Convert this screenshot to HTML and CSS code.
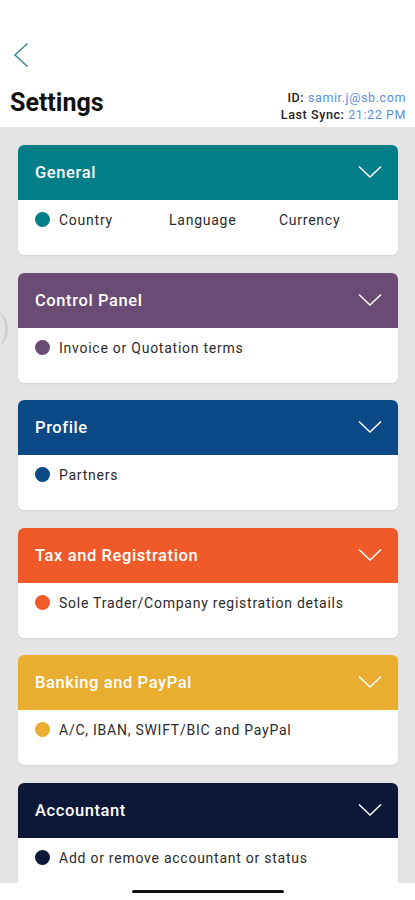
FILE: index.html
```html
<!doctype html>
<html lang="en">
<head>
    <meta charset="UTF-8">
    <meta name="viewport" content="width=device-width, initial-scale=1.0">
    <title>Settings</title>
    <link rel="stylesheet" href="styles.css">
</head>
<body>
    <div id="app">
        <div class="top">
            <div class="back">
                <svg width="16" height="26" viewBox="0 0 16 26"><path d="M14.5 1.5 L2 13 L14.5 24.5" fill="none" stroke="#3b8996" stroke-width="1.6"/></svg>
            </div>
            <div class="title-row">
                <h1>Settings</h1>
                <div class="sync">
                    <p><b>ID:</b> <span>samir.j@sb.com</span></p>
                    <p><b>Last Sync:</b> <span>21:22 PM</span></p>
                </div>
            </div>
        </div>

        <div class="list">
            <span class="pull"></span>

            <div class="card teal">
                <div class="card-head">
                    <span>General</span>
                    <svg class="arrow" width="24" height="14" viewBox="0 0 24 14"><path d="M1 1.5 L12 12 L23 1.5" fill="none" stroke="#fff" stroke-width="1.5"/></svg>
                </div>
                <div class="card-body">
                    <i class="dot"></i>
                    <span class="cell">Country</span>
                    <span class="cell">Language</span>
                    <span>Currency</span>
                </div>
            </div>

            <div class="card purple">
                <div class="card-head">
                    <span>Control Panel</span>
                    <svg class="arrow" width="24" height="14" viewBox="0 0 24 14"><path d="M1 1.5 L12 12 L23 1.5" fill="none" stroke="#fff" stroke-width="1.5"/></svg>
                </div>
                <div class="card-body">
                    <i class="dot"></i>
                    <span>Invoice or Quotation terms</span>
                </div>
            </div>

            <div class="card blue">
                <div class="card-head">
                    <span>Profile</span>
                    <svg class="arrow" width="24" height="14" viewBox="0 0 24 14"><path d="M1 1.5 L12 12 L23 1.5" fill="none" stroke="#fff" stroke-width="1.5"/></svg>
                </div>
                <div class="card-body">
                    <i class="dot"></i>
                    <span>Partners</span>
                </div>
            </div>

            <div class="card orange">
                <div class="card-head">
                    <span>Tax and Registration</span>
                    <svg class="arrow" width="24" height="14" viewBox="0 0 24 14"><path d="M1 1.5 L12 12 L23 1.5" fill="none" stroke="#fff" stroke-width="1.5"/></svg>
                </div>
                <div class="card-body">
                    <i class="dot"></i>
                    <span>Sole Trader/Company registration details</span>
                </div>
            </div>

            <div class="card yellow">
                <div class="card-head">
                    <span>Banking and PayPal</span>
                    <svg class="arrow" width="24" height="14" viewBox="0 0 24 14"><path d="M1 1.5 L12 12 L23 1.5" fill="none" stroke="#fff" stroke-width="1.5"/></svg>
                </div>
                <div class="card-body">
                    <i class="dot"></i>
                    <span>A/C, IBAN, SWIFT/BIC and PayPal</span>
                </div>
            </div>

            <div class="card navy">
                <div class="card-head">
                    <span>Accountant</span>
                    <svg class="arrow" width="24" height="14" viewBox="0 0 24 14"><path d="M1 1.5 L12 12 L23 1.5" fill="none" stroke="#fff" stroke-width="1.5"/></svg>
                </div>
                <div class="card-body">
                    <i class="dot"></i>
                    <span>Add or remove accountant or status</span>
                </div>
            </div>
        </div>

        <div class="home-bar"><span></span></div>
    </div>
</body>
</html>
```

FILE: styles.css
```css
*{
    margin: 0;
    padding: 0;
    box-sizing: border-box;
}
body{
    font-family: Roboto, "Liberation Sans", sans-serif;
    background: #fff;
}
#app{
    width: 415px;
    height: 900px;
    display: flex;
    flex-direction: column;
    overflow: hidden;
}
.top{
    height: 127px;
    background: #fff;
    flex-shrink: 0;
}
.back{
    padding: 42px 0 0 13px;
    height: 84px;
}
.title-row{
    display: flex;
    justify-content: space-between;
    align-items: flex-start;
    padding: 0 9px 0 10px;
}
h1{
    font-size: 25px;
    font-weight: bold;
    color: #111;
    line-height: 38px;
}
.sync{
    text-align: right;
    font-size: 12.5px;
    line-height: 17px;
    letter-spacing: 0.6px;
    color: #222;
    padding-top: 5px;
}
.sync b{
    font-weight: 500;
}
.sync span{
    color: #5b8de6;
}

.list{
    flex: 1;
    background: #e4e4e4;
    padding: 18px 17px 0 18px;
    position: relative;
    overflow: hidden;
}
/* faint pull tab on the left edge */
.pull{
    position: absolute;
    left: -14px;
    top: 185px;
    width: 22px;
    height: 34px;
    border-right: 3px solid #cfcfcf;
    border-radius: 50%;
}
.card{
    background: #fff;
    border-radius: 6px;
    overflow: hidden;
    margin-bottom: 17.5px;
    box-shadow: 0 1px 2px rgba(0,0,0,0.08);
}
.card-head{
    height: 55px;
    display: flex;
    align-items: center;
    justify-content: space-between;
    padding: 0 16px 0 17px;
    color: #fff;
    font-size: 16.5px;
    font-weight: 500;
    letter-spacing: 0.6px;
}
.card-head .arrow{
    margin-top: -1px;
}
.card-body{
    height: 55px;
    display: flex;
    align-items: flex-start;
    padding: 12px 17px 0 17px;
    font-size: 14px;
    line-height: 16px;
    color: #2b2b2b;
    letter-spacing: 0.75px;
}
.dot{
    width: 15px;
    height: 15px;
    border-radius: 50%;
    margin-right: 9px;
    flex-shrink: 0;
}
.cell{
    width: 110px;
}
.teal .card-head, .teal .dot{ background: #027e88; }
.purple .card-head, .purple .dot{ background: #6a4b73; }
.blue .card-head, .blue .dot{ background: #0b4886; }
.orange .card-head, .orange .dot{ background: #f05a28; }
.yellow .card-head, .yellow .dot{ background: #e9ae30; }
.navy .card-head, .navy .dot{ background: #0d1738; }

.home-bar{
    height: 17px;
    background: #fff;
    flex-shrink: 0;
    display: flex;
    justify-content: center;
    padding-top: 7px;
}
.home-bar span{
    width: 152px;
    height: 3px;
    border-radius: 2px;
    background: #111;
}
```
